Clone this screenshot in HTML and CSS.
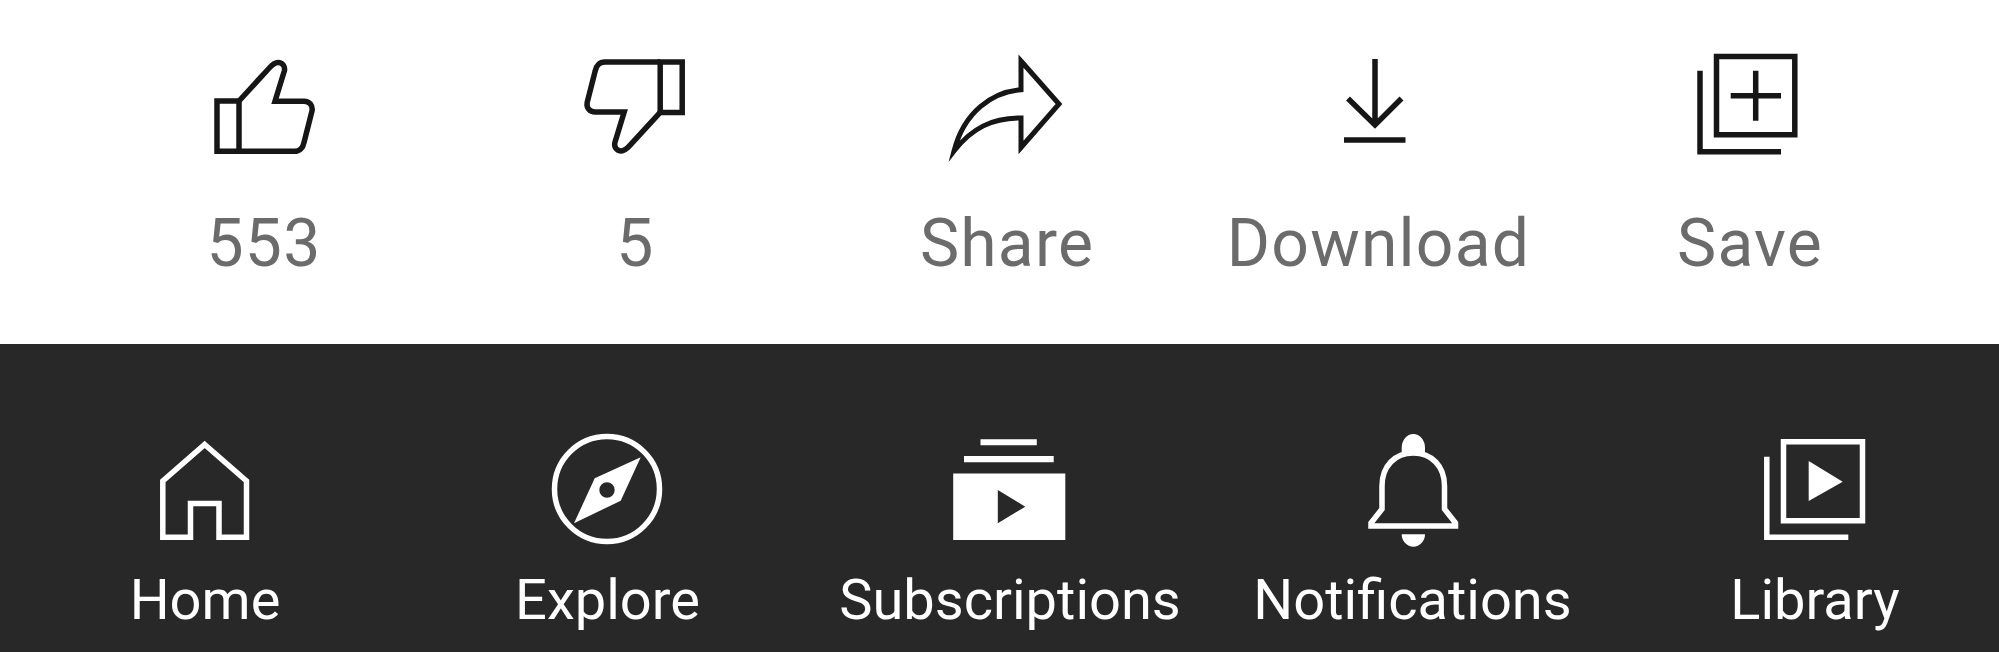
FILE: index.html
```html
<!DOCTYPE html>
<html lang="en">
<head>
  <meta charset="UTF-8" />
  <meta name="viewport" content="width=device-width, initial-scale=1.0"/>
  <title>Video actions</title>
  <link rel="stylesheet" href="styles.css">
</head>
<body>
  <div class="actions">
    <div class="item">
      <svg class="icon" viewBox="0 0 120 120">
        <path d="M13 57H35V107.3H13Z"/>
        <path d="M35 57L65.3 24C68.5 20.5 71 18.5 74 18.5C78.5 18.5 81.5 22.5 80.3 27L71 57.3H100C105.5 57.3 109 61.5 108 67L100 98.5C99 104 95.5 107.3 90.5 107.3H35"/>
      </svg>
      <span class="label">553</span>
    </div>
    <div class="item">
      <svg class="icon" viewBox="0 0 120 120">
        <g transform="rotate(180 59.6 62.7)">
          <path d="M13 57H35V107.3H13Z"/>
          <path d="M35 57L65.3 24C68.5 20.5 71 18.5 74 18.5C78.5 18.5 81.5 22.5 80.3 27L71 57.3H100C105.5 57.3 109 61.5 108 67L100 98.5C99 104 95.5 107.3 90.5 107.3H35"/>
        </g>
      </svg>
      <span class="label">5</span>
    </div>
    <div class="item">
      <svg class="icon" viewBox="0 0 120 120">
        <path class="sharp" d="M74 17L112 60L74 103.5V74C45 74 25 84 7 107C17 68 45 48 74 45.7Z"/>
      </svg>
      <span class="label">Share</span>
    </div>
    <div class="item">
      <svg class="icon" viewBox="0 0 120 120">
        <path d="M56 15V81M29 54.5L56 81L82.5 54.5M25 96H86.5"/>
      </svg>
      <span class="label">Download</span>
    </div>
    <div class="item">
      <svg class="icon" viewBox="0 0 120 120">
        <path d="M26.5 12.5H104.8V90.8H26.5Z"/>
        <path d="M10 26.7V107.7H91M40.7 51.8H91M65.7 26.7V76.7"/>
      </svg>
      <span class="label">Save</span>
    </div>
  </div>

  <div class="tabs">
    <div class="item">
      <svg class="icon" viewBox="0 0 120 120">
        <path d="M59.7 14.5L101.5 51V107.3H74V73.5H45.5V107.3H17.8V51Z"/>
      </svg>
      <span class="label">Home</span>
    </div>
    <div class="item">
      <svg class="icon" viewBox="0 0 120 120">
        <circle cx="59" cy="59" r="52.5"/>
        <path class="solid" fill-rule="evenodd" d="M92.7 27.3L72.7 70.7L26 93.3L46.7 48.3ZM59 52.3A7.7 7.7 0 1 0 59 67.7A7.7 7.7 0 1 0 59 52.3Z"/>
      </svg>
      <span class="label">Explore</span>
    </div>
    <div class="item">
      <svg class="icon" viewBox="0 0 120 120">
        <path class="solid" fill-rule="evenodd" d="M3.2 43.5H115.3V110H3.2ZM47.8 60V93.3L75.3 76.7Z"/>
        <path class="solid" d="M14 26H103.7V32.3H14ZM30.5 9.3H86.8V15.3H30.5Z"/>
      </svg>
      <span class="label">Subscriptions</span>
    </div>
    <div class="item">
      <svg class="icon" viewBox="0 0 120 120">
        <path d="M60.3 23C42 23 29 36 29 56V79L18 93V96H102.5V93L91.5 79V56C91.5 36 78.5 23 60.3 23Z"/>
        <path class="solid" d="M48.7 18A11.6 14 0 0 1 72 18V25H48.7ZM48.7 104.3H72A11.6 12.4 0 0 1 48.7 104.3Z"/>
      </svg>
      <span class="label">Notifications</span>
    </div>
    <div class="item">
      <svg class="icon" viewBox="0 0 120 120">
        <path d="M28.5 11.8H107.5V90.8H28.5Z"/>
        <path d="M11.8 26.7V107.3H93.3"/>
        <path class="solid" d="M53.7 31V71L87.7 51.7Z"/>
      </svg>
      <span class="label">Library</span>
    </div>
  </div>
</body>
</html>
```

FILE: styles.css
```css
* {
  box-sizing: border-box;
}

body {
  margin: 0;
  height: 652px;
  overflow: hidden;
  font-family: 'Roboto', sans-serif;
  background-color: #ffffff;
}

.actions,
.tabs {
  display: flex;
  justify-content: space-between;
}

.actions {
  height: 344px;
  padding: 44px 99px 0 114px;
  color: #6b6b6b;
  background-color: #ffffff;
}

.tabs {
  height: 308px;
  padding: 86px 34px 0 55px;
  color: #ffffff;
  background-color: #282828;
}

.item {
  width: 300px;
  display: flex;
  flex-direction: column;
  align-items: center;
  white-space: nowrap;
}

.icon {
  width: 120px;
  height: 120px;
  flex: none;
  fill: none;
  stroke: currentColor;
  stroke-width: 5.5;
}

.actions .icon {
  stroke: #161616;
}

.icon .solid {
  fill: currentColor;
  stroke: none;
}

.icon .sharp {
  stroke-width: 5;
  stroke-miterlimit: 12;
}

.label {
  font-size: 66px;
  line-height: 76px;
  letter-spacing: 1.2px;
  margin-top: 42px;
}

.tabs .label {
  font-size: 56px;
  line-height: 60px;
  letter-spacing: 0;
  margin-top: 20px;
}
```
